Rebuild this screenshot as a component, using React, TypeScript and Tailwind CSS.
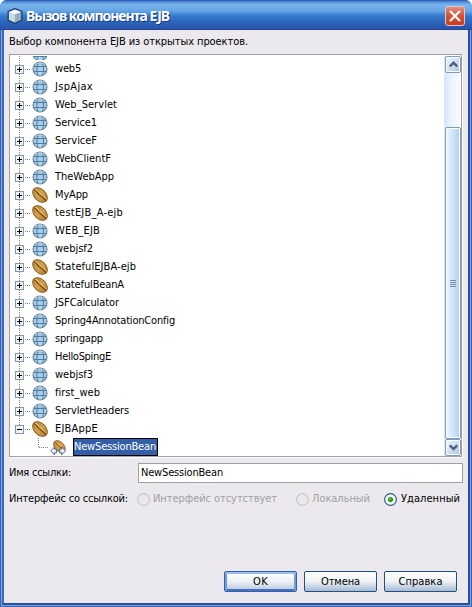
import React from 'react';

type Kind = 'web' | 'ejb';
const projects: [string, Kind, string][] = [
  ['web5', 'web', 'w-[26px]'],
  ['JspAjax', 'web', 'w-[38px]'],
  ['Web_Servlet', 'web', 'w-[62px]'],
  ['Service1', 'web', 'w-[42px]'],
  ['ServiceF', 'web', 'w-[42px]'],
  ['WebClientF', 'web', 'w-[56px]'],
  ['TheWebApp', 'web', 'w-[59px]'],
  ['MyApp', 'ejb', 'w-[33px]'],
  ['testEJB_A-ejb', 'ejb', 'w-[68px]'],
  ['WEB_EJB', 'web', 'w-[45px]'],
  ['webjsf2', 'web', 'w-[38px]'],
  ['StatefulEJBA-ejb', 'ejb', 'w-[81px]'],
  ['StatefulBeanA', 'ejb', 'w-[69px]'],
  ['JSFCalculator', 'web', 'w-[64px]'],
  ['Spring4AnnotationConfig', 'web', 'w-[120px]'],
  ['springapp', 'web', 'w-[48px]'],
  ['HelloSpingE', 'web', 'w-[56px]'],
  ['webjsf3', 'web', 'w-[38px]'],
  ['first_web', 'web', 'w-[45px]'],
  ['ServletHeaders', 'web', 'w-[74px]'],
];

// Spreads the letters of a label so that it fills the width given by its class.
function Label({ text, className }: { text: string; className: string }) {
  const ref = React.useRef<HTMLSpanElement>(null);
  const [gap, setGap] = React.useState(0);
  React.useLayoutEffect(() => {
    const box = ref.current;
    const inner = box?.firstElementChild as HTMLElement | null;
    if (box && inner) {
      setGap((box.getBoundingClientRect().width - inner.getBoundingClientRect().width) / text.length);
    }
  }, [text]);
  return (
    <span ref={ref} className={`block shrink-0 whitespace-pre ${className}`}>
      <span style={{ letterSpacing: gap }}>{text}</span>
    </span>
  );
}

function Globe() {
  return (
    <svg viewBox="0 0 16 16" className="h-4 w-4 shrink-0">
      <defs>
        <linearGradient id="globe" x1="0" y1="0" x2="0" y2="1">
          <stop offset="0" stopColor="#9dbcd8" />
          <stop offset="1" stopColor="#b2dbf3" />
        </linearGradient>
      </defs>
      <circle cx="8" cy="8" r="7" fill="url(#globe)" stroke="#6f8b9c" strokeWidth="1.2" />
      <path d="M1.5 5.5h13M1.5 10.5h13M6 1.4C4.6 5.5 4.6 10.5 6 14.6M10.5 1.4c1.4 4.1 1.4 9.1 0 13.2" fill="none" stroke="#537fa3" strokeWidth="1" />
      <path d="M3.5 3.2Q8 .4 12.5 3.2" fill="none" stroke="#c3d9e8" strokeWidth=".8" />
    </svg>
  );
}

function BeanShape() {
  return (
    <>
      <ellipse cx="8" cy="8" rx="8.6" ry="5.7" transform="rotate(45 8 8)" fill="url(#bean)" stroke="#8a642c" strokeWidth="1" />
      <path d="M1.8 2.6C4.6 3.6 5.4 5.8 7.4 7.8c2.2 2.1 4.6 3 6.4 5.8" fill="none" stroke="#6b420f" strokeWidth="1.1" />
      <path d="M2.8 2.2c2.8.9 3.9 3 5.8 4.9 2 1.9 4 2.8 5.6 5.1" fill="none" stroke="#f3cf85" strokeWidth="1" />
    </>
  );
}

function Bean() {
  return (
    <svg viewBox="0 0 16 16" className="h-4 w-4 shrink-0">
      <defs>
        <linearGradient id="bean" x1="0" y1="0" x2="1" y2="0">
          <stop offset="0" stopColor="#b98638" />
          <stop offset=".5" stopColor="#d5a04c" />
          <stop offset="1" stopColor="#b57f30" />
        </linearGradient>
      </defs>
      <BeanShape />
    </svg>
  );
}

function SessionBean() {
  return (
    <svg viewBox="0 0 17 17" className="h-[17px] w-[17px] shrink-0">
      <g transform="translate(3 1) scale(.8)">
        <BeanShape />
      </g>
      <path d="M.6 11.5 4.6 7.5v2.2h2v3.6h-2v2.2ZM15.6 11.5l-4-4v2.2H9.4v3.6h2.2v2.2Z" transform="translate(0 .4)" fill="#e3edf5" stroke="#52677c" strokeWidth="1" />
    </svg>
  );
}

function Toggle({ open = false }: { open?: boolean }) {
  return (
    <svg viewBox="0 0 9 9" className="h-[9px] w-[9px] shrink-0" shapeRendering="crispEdges">
      <rect x=".5" y=".5" width="8" height="8" fill="#f4f2ed" stroke="#7b98b5" />
      <path d={open ? 'M2 4.5h5' : 'M2 4.5h5M4.5 2v5'} stroke="#000" />
    </svg>
  );
}

function Row({ name, kind, width, open = false }: { name: string; kind: Kind; width: string; open?: boolean }) {
  return (
    <div className="flex h-[18px] shrink-0 items-center">
      <div className="flex h-[18px] w-[9px] flex-col items-center">
        <Dots className="h-[5px]" />
        <Toggle open={open} />
        {!open && <Dots className="h-1" />}
      </div>
      <svg className="ml-px h-px w-[7px] shrink-0" shapeRendering="crispEdges">
        <path d="M0 .5h6" stroke="#808080" strokeDasharray="1 1" />
      </svg>
      <div className="-mt-px mr-[7px] flex">{kind === 'web' ? <Globe /> : <Bean />}</div>
      <Label text={name} className={width} />
    </div>
  );
}

function Dots({ className }: { className: string }) {
  return (
    <svg className={`w-px shrink-0 ${className}`} shapeRendering="crispEdges">
      <path d="M.5 0v20" stroke="#808080" strokeDasharray="1 1" />
    </svg>
  );
}

function ScrollButton({ down = false }: { down?: boolean }) {
  return (
    <div className="flex h-[17px] w-4 shrink-0 items-center justify-center rounded-[2px] border border-[#7f9db9] bg-linear-to-br from-[#f4f9ff] to-[#a9c4e4] shadow-[inset_0_0_0_1px_#fff]">
      <svg viewBox="0 0 9 7" className="h-[7px] w-[9px]">
        <path d={down ? 'M.8 1.3 4.5 5 8.2 1.3' : 'M.8 5.5 4.5 1.8 8.2 5.5'} fill="none" stroke="#4d5f7c" strokeWidth="2.4" />
      </svg>
    </div>
  );
}

function Radio({ checked = false }: { checked?: boolean }) {
  return (
    <svg viewBox="0 0 13 13" className="h-[13px] w-[13px] shrink-0">
      <circle cx="6.5" cy="6.5" r="5.9" fill={checked ? '#f8faf5' : '#ebe9ed'} stroke={checked ? '#285481' : '#c9c7ba'} strokeWidth="1.1" />
      {checked && <circle cx="6.5" cy="6.5" r="2.6" fill="#21a121" />}
      {checked && <circle cx="6" cy="6" r="1" fill="#55d551" />}
    </svg>
  );
}

function Button({ text, width, primary = false }: { text: string; width: string; primary?: boolean }) {
  return (
    <button
      className={`flex h-[21px] w-[73px] items-center justify-center rounded-[2px] border ${
        primary
          ? 'border-[#3560aa] bg-linear-to-b from-white via-[#edf1f5] to-[#b5c5da] shadow-[inset_0_2px_0_#98c0ee,inset_2px_0_0_#6f9cdd,inset_-2px_0_0_#6f9cdd,inset_0_-2px_0_#4470be]'
          : 'border-[#23507f] bg-linear-to-b from-white via-[#eef2f5] to-[#a6bad5]'
      }`}
    >
      <Label text={text} className={width} />
    </button>
  );
}

export default function App() {
  return (
    <div className="h-[607px] w-[472px] overflow-hidden bg-white font-['DejaVu_Sans_Condensed','DejaVu_Sans',sans-serif] text-[11px] leading-[18px] text-black">
      <div className="flex h-full flex-col overflow-hidden rounded-t-[7px] bg-[#2f5bb0]">
        <header className="flex h-[30px] shrink-0 items-center border-b border-[#2347a0] bg-[linear-gradient(#2550ad_0px,#5793dc_2px,#79b5ec_5px,#65a4e5_11px,#468bd7_14px,#3478cc_16px,#2c66bd_22px,#2952a8_29px)] pl-[7px] pr-[7px] pt-[3px]">
          <svg viewBox="0 0 16 16" className="mr-[3px] h-4 w-4 shrink-0">
            <path d="M8 .8 14.8 3.4v8.8L8 15.2 1.2 12.2V3.4Z" fill="#b9ccda" stroke="#24466f" strokeWidth="1.6" strokeLinejoin="round" />
            <path d="M1.9 3.9 8 1.5l6.1 2.4L8 6.4Z" fill="#f4fafc" />
            <path d="M1.9 4.2 8 6.6v7.9l-6.1-2.8Z" fill="#c9dce4" />
            <path d="m8 6.6 6.1-2.4v7.5L8 14.5Z" fill="#91adc6" />
          </svg>
          <div className="font-['Noto_Sans','Open_Sans',sans-serif] text-[14px] font-bold text-white [text-shadow:1px_1px_#173a82]">
            <Label text="Вызов компонента EJB" className="w-[143px]" />
          </div>
          <div className="ml-auto flex h-5 w-5 items-center justify-center rounded-[3px] border border-[#dfc5cf] bg-linear-to-b from-[#df8d80] via-[#d65032] to-[#cc3c20]">
            <svg viewBox="0 0 12 12" className="h-3 w-3">
              <path d="m1 1 10 10M11 1 1 11" stroke="#fff" strokeWidth="2.3" />
            </svg>
          </div>
        </header>
        <div className="flex min-h-0 flex-1 border-x border-b border-[#3764b5] bg-[#7aa5df] px-px pb-px">
          <main className="flex min-w-0 flex-1 flex-col border-x-2 border-b-2 border-[#2a4e9f] border-l-[#4068b6] bg-[#ebe9ed]">
            <div className="ml-[5px] mt-[3px] h-[21px] shrink-0">
              <Label text="Выбор компонента EJB из открытых проектов." className="w-[239px]" />
            </div>
            <section className="ml-[5px] flex h-[403px] w-[453px] shrink-0 overflow-hidden border border-[#a0a0a4] bg-white shadow-[1px_1px_#fff]">
              <div className="flex min-w-0 flex-1 flex-col pl-[5px] pt-px">
                <div className="flex h-1 items-end overflow-hidden">
                  <div className="ml-1 flex h-1"><Dots className="h-1" /></div>
                  <div className="-mb-[2px] ml-3 flex h-4 items-end"><Globe /></div>
                </div>
                {projects.map(([name, kind, width]) => (
                  <Row key={name} name={name} kind={kind} width={width} />
                ))}
                <Row name="EJBAppE" kind="ejb" width="w-[43px]" open />
                <div className="flex h-[18px] items-center pl-[23px]">
                  <svg viewBox="0 0 11 18" className="h-[18px] w-[11px] shrink-0" shapeRendering="crispEdges">
                    <path d="M.5 0v9M1 9.5h10" stroke="#808080" strokeDasharray="1 1" />
                  </svg>
                  <div className="ml-px mr-[6px]"><SessionBean /></div>
                  <div className="flex h-[18px] w-[85px] items-center border border-black bg-[#335ea8] text-white">
                    <Label text="NewSessionBean" className="w-[82px]" />
                  </div>
                </div>
              </div>
              <div className="mt-px flex w-[17px] shrink-0 flex-col bg-linear-to-r from-[#d5e5fc] via-[#edf4ff] to-[#fbfcff] pl-px">
                <ScrollButton />
                <div className="mt-[54px] flex w-4 flex-1 flex-col items-center justify-center gap-px rounded-[2px] border border-[#7f9db9] bg-linear-to-r from-[#edf5ff] via-[#d0e4fd] to-[#b5cce9] shadow-[inset_0_0_0_1px_#fff]">
                  <i className="h-px w-[6px] bg-[#7189b5]" />
                  <i className="h-px w-[6px] bg-[#7189b5]" />
                  <i className="h-px w-[6px] bg-[#7189b5]" />
                  <i className="h-px w-[6px] bg-[#7189b5]" />
                </div>
                <ScrollButton down />
              </div>
            </section>
            <div className="ml-[5px] mt-[6px] flex h-5 shrink-0 items-center">
              <Label text="Имя ссылки:" className="w-[62px]" />
              <div className="ml-[67px] flex h-5 w-[325px] items-center border border-[#a0a0a4] bg-white pl-[2px]">
                <Label text="NewSessionBean" className="w-[82px]" />
              </div>
            </div>
            <div className="ml-[5px] mt-[7px] flex h-[18px] shrink-0 items-center text-[#a0a0a4]">
              <div className="text-black"><Label text="Интерфейс со ссылкой:" className="w-[119px]" /></div>
              <div className="ml-[9px] mr-[3px]"><Radio /></div>
              <Label text="Интерфейс отсутствует" className="w-[124px]" />
              <div className="ml-[19px] mr-[3px]"><Radio /></div>
              <Label text="Локальный" className="w-[58px]" />
              <div className="ml-[14px] mr-[4px]"><Radio checked /></div>
              <div className="text-black"><Label text="Удаленный" className="w-[59px]" /></div>
            </div>
            <div className="mb-[11px] mr-[11px] mt-auto flex justify-end gap-[7px]">
              <Button text="OK" width="w-[15px]" primary />
              <Button text="Отмена" width="w-[39px]" />
              <Button text="Справка" width="w-[44px]" />
            </div>
          </main>
        </div>
      </div>
    </div>
  );
}
